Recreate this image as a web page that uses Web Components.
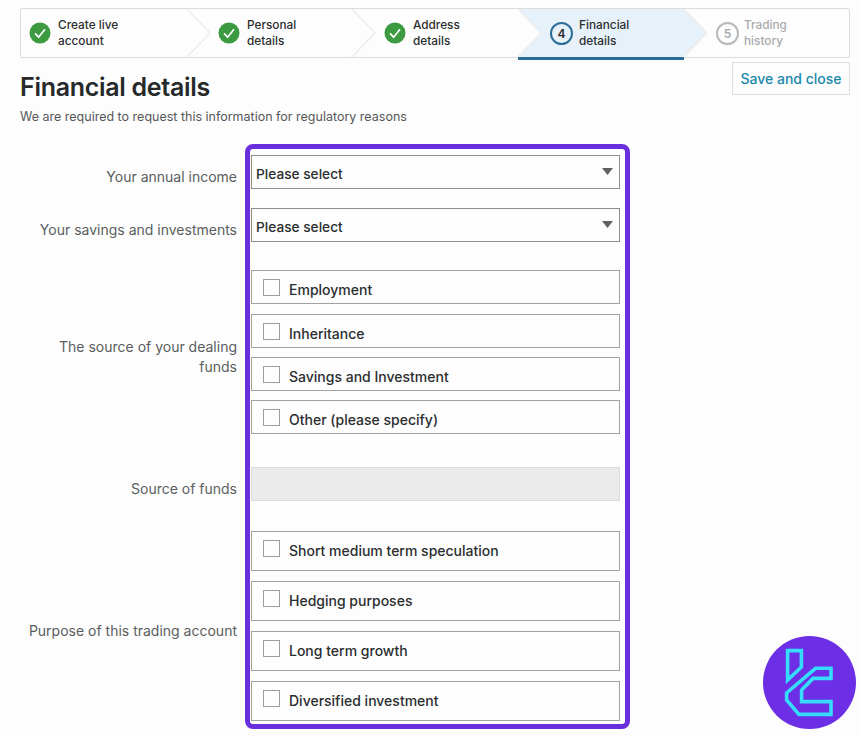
<!DOCTYPE html>
<html>
<head>
<meta charset="utf-8">
<title>Financial details</title>
<style>
  html, body { margin: 0; padding: 0; height: 736px; overflow: hidden; background: #fdfdfd; }
  body { font-family: Inter, "Liberation Sans", sans-serif; color: #2a2d2e; position: relative; }
</style>
</head>
<body>
<fin-page>
  <step-bar>
    <step-item state="done" first>Create live<br>account</step-item>
    <step-item state="done">Personal<br>details</step-item>
    <step-item state="done">Address<br>details</step-item>
    <step-item state="active" num="4">Financial<br>details</step-item>
    <step-item state="todo" num="5" last>Trading<br>history</step-item>
  </step-bar>
  <page-head>
    <span slot="title">Financial details</span>
    <span slot="sub">We are required to request this information for regulatory reasons</span>
    <span slot="action">Save and close</span>
  </page-head>
  <form-row label="Your annual income" gap="19"><select-box>Please select</select-box></form-row>
  <form-row label="Your savings and investments" gap="28"><select-box>Please select</select-box></form-row>
  <form-row label="The source of your dealing funds" gap="33">
    <check-row h="34">Employment</check-row>
    <check-row h="34" style="margin-top:10px">Inheritance</check-row>
    <check-row h="34" style="margin-top:9px">Savings and Investment</check-row>
    <check-row h="34" style="margin-top:9px">Other (please specify)</check-row>
  </form-row>
  <form-row label="Source of funds" gap="30"><text-box></text-box></form-row>
  <form-row label="Purpose of this trading account" gap="0">
    <check-row h="40">Short medium term speculation</check-row>
    <check-row h="40" style="margin-top:10px">Hedging purposes</check-row>
    <check-row h="40" style="margin-top:10px">Long term growth</check-row>
    <check-row h="40" style="margin-top:10px">Diversified investment</check-row>
  </form-row>
  <focus-frame></focus-frame>
  <corner-logo></corner-logo>
</fin-page>

<script>
(function() {

  class FinPage extends HTMLElement {
    constructor() {
      super();
      this.attachShadow({ mode: 'open' });
      this.shadowRoot.innerHTML = `
        <style>
          :host { display: block; padding: 8px 12px 0 20px; }
        </style>
        <slot></slot>
      `;
    }
  }

  class StepBar extends HTMLElement {
    constructor() {
      super();
      this.attachShadow({ mode: 'open' });
      this.shadowRoot.innerHTML = `
        <style>
          :host {
            display: flex;
            height: 50px;
            box-sizing: border-box;
            border: 1px solid #dcdcdc;
            border-radius: 2px;
            background: #fdfdfd;
          }
        </style>
        <slot></slot>
      `;
    }
  }

  const CHECK = `<svg width="22" height="22" viewBox="0 0 22 22">
    <circle cx="11" cy="11" r="10.5" fill="#3c9a41"/>
    <path d="M6 11.4 L9.6 15.2 L16 7.2" fill="none" stroke="#fff" stroke-width="1.7"/>
  </svg>`;

  class StepItem extends HTMLElement {
    constructor() {
      super();
      this.attachShadow({ mode: 'open' });
    }

    connectedCallback() {
      const state = this.getAttribute('state');
      const num = this.getAttribute('num');
      const badge = state === 'done' ? CHECK : `<span class="num">${num}</span>`;
      this.shadowRoot.innerHTML = `
        <style>
          :host {
            display: flex;
            position: relative;
            flex: 0 0 166px;
            height: 48px;
            box-sizing: border-box;
            align-items: center;
            padding-left: 32px;
            gap: 7px;
            font-size: 11.8px;
            line-height: 16px;
            font-weight: 500;
            color: #2b2e2f;
          }
          :host([first]) { padding-left: 8px; flex-basis: 165px; gap: 7px; }
          :host([last]) { flex: 1; gap: 6px; color: #a9abac; }
          .bg { position: absolute; left: 0; top: 0; width: 190px; height: 48px; z-index: 1; pointer-events: none; }
          .badge, .label { position: relative; z-index: 2; }
          .badge { width: 22px; height: 22px; flex: none; }
          .badge svg { display: block; }
          .num {
            display: flex; align-items: center; justify-content: center;
            box-sizing: border-box;
            width: 23px; height: 23px;
            border-radius: 50%;
            font-size: 12px;
            font-weight: 600;
          }
          :host([state=active]) .num { border: 2px solid #2c6d96; color: #2b2e2f; }
          :host([state=todo]) .num { border: 2px solid #b8b9ba; color: #a9abac; }
          .bar { position: absolute; left: 0; right: 0; bottom: -3px; height: 3px; background: #2c6d96; z-index: 3; }
        </style>
        ${this.hasAttribute('last') ? '' : `
        <svg class="bg" viewBox="0 0 190 48">
          ${state === 'active' ? '<path d="M0 0 L165 0 L189 24 L165 48 L0 48 L23 24 Z" fill="#e7f1fa"/>' : ''}
          <path d="M166 0 L189 24 L166 48" fill="none" stroke="#ebebeb" stroke-width="1.2"/>
        </svg>`}
        <span class="badge">${badge}</span>
        <span class="label"><slot></slot></span>
        ${state === 'active' ? '<span class="bar"></span>' : ''}
      `;
    }
  }

  class PageHead extends HTMLElement {
    constructor() {
      super();
      this.attachShadow({ mode: 'open' });
      this.shadowRoot.innerHTML = `
        <style>
          :host { display: flex; justify-content: space-between; height: 97px; }
          h1 {
            margin: 14px 0 0;
            font-size: 25px;
            line-height: 30px;
            font-weight: 600;
            letter-spacing: -0.3px;
            color: #26292a;
          }
          p { margin: 7px 0 0; font-size: 12.5px; line-height: 16px; color: #555859; }
          .save {
            box-sizing: border-box;
            width: 118px;
            height: 33px;
            margin-top: 4px;
            border: 1px solid #d9dfe2;
            display: flex; align-items: center; justify-content: center;
            font-size: 14px;
            font-weight: 500;
            color: #1a88ab;
          }
        </style>
        <div>
          <h1><slot name="title"></slot></h1>
          <p><slot name="sub"></slot></p>
        </div>
        <div class="save"><slot name="action"></slot></div>
      `;
    }
  }

  class FormRow extends HTMLElement {
    constructor() {
      super();
      this.attachShadow({ mode: 'open' });
    }

    connectedCallback() {
      this.shadowRoot.innerHTML = `
        <style>
          :host {
            display: grid;
            grid-template-columns: 217px 369px;
            column-gap: 14px;
            align-items: center;
            margin-bottom: ${this.getAttribute('gap') || 0}px;
          }
          .label {
            text-align: right;
            padding-top: 9px;
            font-size: 14px;
            line-height: 20px;
            color: #5a5d5e;
          }
          .field { display: block; }
        </style>
        <div class="label">${this.getAttribute('label')}</div>
        <div class="field"><slot></slot></div>
      `;
    }
  }

  class SelectBox extends HTMLElement {
    constructor() {
      super();
      this.attachShadow({ mode: 'open' });
      this.shadowRoot.innerHTML = `
        <style>
          :host {
            display: flex;
            box-sizing: border-box;
            height: 34px;
            align-items: center;
            justify-content: space-between;
            padding: 3px 6px 0 4px;
            border: 1px solid #8d8d8d;
            font-size: 13.7px;
            font-weight: 450;
            color: #2b2e2f;
          }
          svg { display: block; margin-top: -5px; }
        </style>
        <span><slot></slot></span>
        <svg width="11" height="7" viewBox="0 0 11 7"><path d="M0 0 H11 L5.5 7 Z" fill="#5f6162"/></svg>
      `;
    }
  }

  class TextBox extends HTMLElement {
    constructor() {
      super();
      this.attachShadow({ mode: 'open' });
      this.shadowRoot.innerHTML = `
        <style>
          :host {
            display: block;
            box-sizing: border-box;
            height: 34px;
            border: 1px solid #dcdcdc;
            background: #ebebeb;
          }
        </style>
      `;
    }
  }

  class CheckRow extends HTMLElement {
    constructor() {
      super();
      this.attachShadow({ mode: 'open' });
    }

    connectedCallback() {
      this.shadowRoot.innerHTML = `
        <style>
          :host {
            display: flex;
            box-sizing: border-box;
            height: ${this.getAttribute('h')}px;
            align-items: flex-start;
            padding: 8px 0 0 11px;
            gap: 9px;
            border: 1px solid #a2a2a2;
            font-size: 14px;
            line-height: 22px;
            font-weight: 450;
            color: #2b2e2f;
          }
          .box {
            flex: none;
            box-sizing: border-box;
            width: 17px;
            height: 17px;
            border: 1px solid #9c9c9c;
            background: #fdfdfd;
          }
        </style>
        <span class="box"></span>
        <span><slot></slot></span>
      `;
    }
  }

  // annotation drawn over the form
  class FocusFrame extends HTMLElement {
    constructor() {
      super();
      this.attachShadow({ mode: 'open' });
      this.shadowRoot.innerHTML = `
        <style>
          :host {
            position: absolute;
            left: 245px;
            top: 144px;
            width: 385px;
            height: 585px;
            box-sizing: border-box;
            border: 5px solid #6a2fdc;
            border-radius: 8px;
          }
        </style>
      `;
    }
  }

  class CornerLogo extends HTMLElement {
    constructor() {
      super();
      this.attachShadow({ mode: 'open' });
      this.shadowRoot.innerHTML = `
        <style>
          :host { position: absolute; left: 763px; top: 636px; width: 93px; height: 93px; }
          svg { display: block; }
        </style>
        <svg width="93" height="93" viewBox="0 0 93 93">
          <circle cx="46.5" cy="46.5" r="46.5" fill="#6d2fe6"/>
          <g fill="none" stroke="#35dcfb" stroke-width="3.6" stroke-linejoin="miter">
            <path d="M24.6 14.6 H38.4 V31 L24.6 44 Z"/>
            <path d="M52.5 32.3 H68 V42.4 H50 L38.6 54 V65.6 H68 V78.4 H36 L23.6 64 V57 Z"/>
          </g>
        </svg>
      `;
    }
  }

  window.customElements.define('fin-page', FinPage);
  window.customElements.define('step-bar', StepBar);
  window.customElements.define('step-item', StepItem);
  window.customElements.define('page-head', PageHead);
  window.customElements.define('form-row', FormRow);
  window.customElements.define('select-box', SelectBox);
  window.customElements.define('text-box', TextBox);
  window.customElements.define('check-row', CheckRow);
  window.customElements.define('focus-frame', FocusFrame);
  window.customElements.define('corner-logo', CornerLogo);

})();
</script>
</body>
</html>
